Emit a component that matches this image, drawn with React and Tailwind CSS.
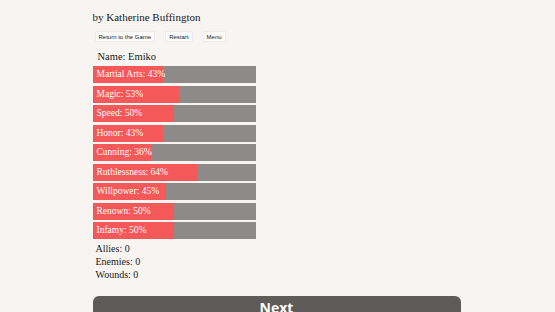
import React from 'react';

const stats = [
  { label: 'Martial Arts', value: 43 },
  { label: 'Magic', value: 53 },
  { label: 'Speed', value: 50 },
  { label: 'Honor', value: 43 },
  { label: 'Cunning', value: 36 },
  { label: 'Ruthlessness', value: 64 },
  { label: 'Willpower', value: 45 },
  { label: 'Renown', value: 50 },
  { label: 'Infamy', value: 50 },
];

function StatBar({ label, value }) {
  return (
    <div className="relative h-[17px] w-[163px] bg-[#8d8a89] mb-[2.5px]">
      <div className="h-full bg-[#f45858]" style={{ width: `${value}%` }} />
      <span className="absolute left-[4px] top-0 leading-[17px] text-white text-[9.5px] whitespace-nowrap">
        {label}: {value}%
      </span>
    </div>
  );
}

export default function App() {
  return (
    <main
      className="w-[555px] h-[312px] overflow-hidden bg-[#f7f4f1] text-[#1a1a1a]"
      style={{ fontFamily: '"Liberation Serif", "DejaVu Serif", serif' }}
    >
      <div className="w-[368px] mx-auto pt-[9px] pl-[0px]">
        <div className="text-[11px] leading-[16px] -ml-[1px]">by Katherine Buffington</div>

        <div className="flex gap-[10px] mt-[6px] ml-[1px]" style={{ fontFamily: '"Liberation Sans", Arial, sans-serif' }}>
          <button className="h-[11px] px-[3px] text-[6px] leading-[11px] bg-[#fbfbfb] border border-[#ececec] rounded-[1px] text-[#222]">
            Return to the Game
          </button>
          <button className="h-[11px] px-[3px] text-[6px] leading-[11px] bg-[#fbfbfb] border border-[#ececec] rounded-[1px] text-[#222]">
            Restart
          </button>
          <button className="h-[11px] px-[3px] text-[6px] leading-[11px] bg-[#fbfbfb] border border-[#ececec] rounded-[1px] text-[#222]">
            Menu
          </button>
        </div>

        <div className="mt-[8px] ml-[4px] text-[10.5px] leading-[14px]">Name: Emiko</div>

        <div className="mt-[2px] -ml-[1px]">
          {stats.map((s) => (
            <StatBar key={s.label} label={s.label} value={s.value} />
          ))}
        </div>

        <div className="ml-[2px] mt-[1px] text-[10px] leading-[13px]">
          <div>Allies: 0</div>
          <div>Enemies: 0</div>
          <div>Wounds: 0</div>
        </div>

        <button
          className="mt-[15px] -ml-[1px] w-[368px] h-[30px] rounded-[6px] bg-[#5f5b59] text-white font-bold text-[14px] leading-[24px] pb-[6px]"
          style={{ fontFamily: '"Open Sans", "Liberation Sans", sans-serif' }}
        >
          Next
        </button>
      </div>
    </main>
  );
}
